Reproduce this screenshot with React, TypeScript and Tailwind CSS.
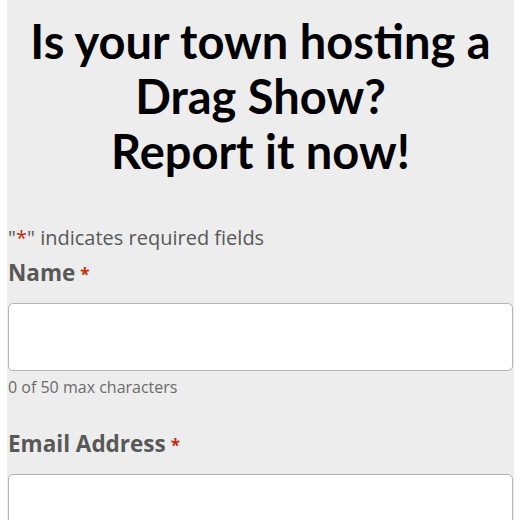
import React from 'react';

const openSans = "font-['Open_Sans',sans-serif]";

function Field({ label }: { label: string }) {
  return (
    <label className={`${openSans} block text-[22.5px] leading-[30px] font-bold text-[#585858]`}>
      {label}
      <span className="text-[#c02b0a] text-[17px] leading-none ml-[5px]">*</span>
    </label>
  );
}

export default function App() {
  return (
    <div className="w-[520px] h-[520px] bg-white overflow-hidden">
      <div className="ml-[7px] w-[507px] min-h-[520px] bg-[#ededed] pl-[1px] pr-[1px]">
        <h1 className="pt-[14px] text-center font-['Lato',sans-serif] font-bold text-[47px] leading-[55px] text-black">
          Is your town hosting a
          <br />
          Drag Show?
          <br />
          Report it now!
        </h1>

        <p className={`${openSans} mt-[45px] text-[20px] leading-[28px] text-[#585858]`}>
          "<span className="text-[#c02b0a]">*</span>" indicates required fields
        </p>

        <div className="mt-[6px]">
          <Field label="Name" />
          <div className="mt-[15px] h-[68px] bg-white border border-[#b5b5b5] rounded-[5px]" />
          <p className={`${openSans} mt-[5px] text-[16px] leading-[22px] text-[#6b6b6b]`}>0 of 50 max characters</p>
        </div>

        <div className="mt-[31px]">
          <Field label="Email Address" />
          <div className="mt-[15px] h-[68px] bg-white border border-[#b5b5b5] rounded-[5px]" />
        </div>
      </div>
    </div>
  );
}
